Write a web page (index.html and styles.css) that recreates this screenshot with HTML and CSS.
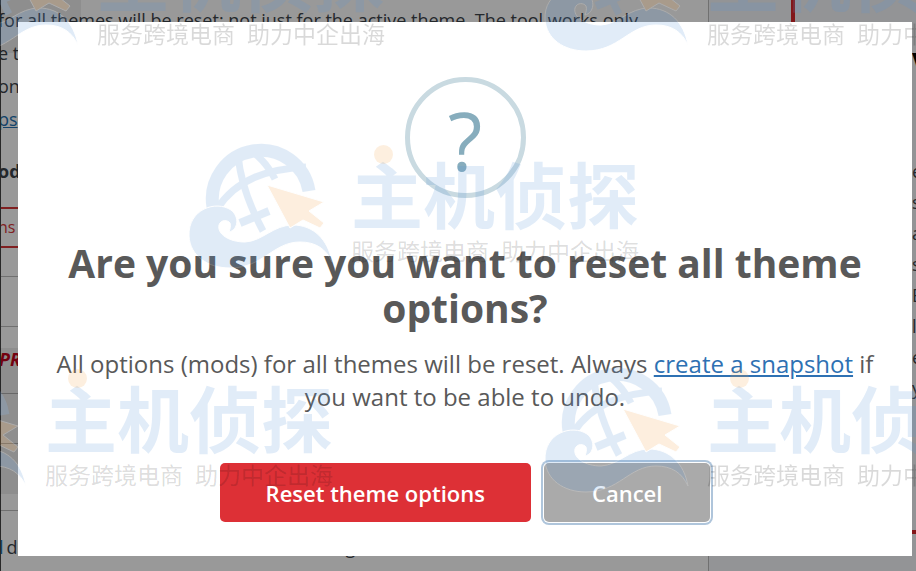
FILE: index.html
```html
<!DOCTYPE html>
<html lang="en">

<head>
    <meta charset="UTF-8">
    <meta name="viewport" content="width=device-width, initial-scale=1.0">
    <title>Reset theme options</title>

    <link rel="stylesheet" href="styles.css">
</head>

<body>
    <svg class="defs" aria-hidden="true">
        <symbol id="globe" viewBox="0 0 145 128">
            <g fill="none" stroke="#5a96d7">
                <path stroke-width="13" d="M25 66 A48.5 48.5 0 1 1 121 50" />
                <path stroke-width="7" d="M29 68 C48 38 80 28 118 26" />
                <path stroke-width="7" d="M50 14 C52 36 60 62 75 90" />
                <path stroke-width="7" d="M64 10 C74 18 82 28 87 38" />
                <path stroke-width="8" d="M52 82 L81 70" />
            </g>
            <path fill="#5a96d7" stroke="#fff" d="M144 121 C140 98 125 84 105 84 C85 84 75 100 57 101 C41 101 29 93 31 84 C33 78 40 79 42 82 C43 85 42 88 41 91 C50 89 52 76 43 69 C28 59 0 68 1 95 C2 115 20 127 42 127 C75 127 85 101 112 101 C128 101 138 108 144 121 Z" />
            <path fill="#f5a550" stroke="#fff" d="M79 44 L136 61 L121 70 L136 82 L132 87 L115 79 L102 87 Z" />
        </symbol>
    </svg>

    <div class="page">
        <main class="settings">
            <div class="intro">
                <p>for all themes will be reset; not just for the active theme. The tool works only</p>
                <p>e th</p>
                <p>on</p>
                <p><a href="#">ps</a></p>
            </div>
            <p class="mods">odi</p>
            <button type="button" class="outline">ns</button>
            <div class="row short"></div>
            <div class="row pro">PR</div>
            <div class="row short"></div>
            <div class="row"></div>
            <div class="row last"><a href="#">l</a> d <span class="g">g</span><span class="p">,</span><span class="y">,</span></div>
        </main>
        <aside class="sidebar">
            <div class="promo"></div>
            <div class="blurb">
                <b class="v">V</b>
                <p>e</p>
                <p>s</p>
                <p>a</p>
                <p>s</p>
                <p>E</p>
                <p>l</p>
                <p>e</p>
                <p>y</p>
            </div>
        </aside>
    </div>

    <div class="backdrop">
        <div class="dialog" role="dialog" aria-labelledby="title">
            <div class="icon">?</div>
            <h2 id="title">Are you sure you want to reset all theme options?</h2>
            <p class="text">All options (mods) for all themes will be reset. Always <a href="#">create a snapshot</a> if you want to be able to undo.</p>
            <div class="actions">
                <button type="button" class="btn confirm">Reset theme options</button>
                <button type="button" class="btn cancel">Cancel</button>
            </div>
        </div>
    </div>

    <div class="marks" lang="zh-CN">
        <div class="mark top-left">
            <svg class="globe"><use href="#globe" /></svg>
            <div class="brand">
                <div class="name">主机侦探</div>
                <div class="tagline"><span>服务跨境电商</span><span>助力中企出海</span></div>
            </div>
        </div>
        <div class="mark top-right">
            <svg class="globe"><use href="#globe" /></svg>
            <div class="brand">
                <div class="name">主机侦探</div>
                <div class="tagline"><span>服务跨境电商</span><span>助力中企出海</span></div>
            </div>
        </div>
        <div class="mark middle">
            <svg class="globe"><use href="#globe" /></svg>
            <div class="brand">
                <div class="name">主机侦探</div>
                <div class="tagline"><span>服务跨境电商</span><span>助力中企出海</span></div>
            </div>
        </div>
        <div class="mark bottom-left">
            <svg class="globe"><use href="#globe" /></svg>
            <div class="brand">
                <div class="name">主机侦探</div>
                <div class="tagline"><span>服务跨境电商</span><span>助力中企出海</span></div>
            </div>
        </div>
        <div class="mark bottom-right">
            <svg class="globe"><use href="#globe" /></svg>
            <div class="brand">
                <div class="name">主机侦探</div>
                <div class="tagline"><span>服务跨境电商</span><span>助力中企出海</span></div>
            </div>
        </div>
    </div>
</body>

</html>
```

FILE: styles.css
```css
* {
    box-sizing: border-box;
}

body {
    margin: 0;
    min-height: 100vh;
    overflow: hidden;
    font-family: "Open Sans", "Noto Sans", sans-serif;
    color: #3c434a;
}

p {
    margin: 0;
}

.defs {
    position: absolute;
    width: 0;
    height: 0;
}

/* page behind the dialog */
.page {
    display: flex;
    height: 100vh;
    font-size: 18px;
    line-height: 33px;
    background: #fff;
}

.settings {
    flex: 1;
    border-left: 1px solid #444;
    border-right: 1px solid #bbb;
    white-space: nowrap;
    overflow: hidden;
}

.settings p {
    text-indent: -3px;
}

.intro {
    padding-top: 4px;
}

.settings a {
    color: #2271b1;
}

.mods {
    padding: 19px 0;
    font-weight: bold;
}

.outline {
    display: block;
    width: 60px;
    height: 41px;
    padding: 0;
    border: solid #d63638;
    border-width: 2px 0;
    background: none;
    color: #d63638;
    font: inherit;
    font-size: 16px;
    text-align: left;
    text-indent: -3px;
    margin-bottom: 28px;
}

.row {
    height: 67px;
    padding: 16px 0;
    border-top: 1px solid #bbb;
}

.row.short {
    height: 50px;
}

.pro {
    color: #d0021b;
    font-weight: bold;
    font-style: italic;
    text-indent: -2px;
}

.row.last {
    display: flex;
    padding: 20px 0;
    gap: 5px;
    text-indent: -2px;
}

.last a {
    text-decoration: none;
}

.g {
    margin-left: 325px;
}

.p {
    margin-left: 24px;
}

.y {
    margin-left: 138px;
}

.sidebar {
    width: 207px;
    display: flex;
    flex-direction: column;
    background: #f6f7fa;
}

.promo {
    height: 22px;
    margin-left: 82px;
    border-left: 4px solid #d9252a;
}

.blurb {
    height: 512px;
    padding-left: 203px;
    border-bottom: 4px solid #d9252a;
    line-height: 31px;
    overflow: hidden;
}

.v {
    display: block;
    height: 134px;
    padding-top: 27px;
    font-size: 34px;
    color: #000;
}

/* dialog */
.backdrop {
    position: fixed;
    inset: 0;
    display: flex;
    align-items: flex-start;
    padding: 22px 4px 15px 18px;
    background: rgba(0, 0, 0, .4);
}

.dialog {
    flex: 1;
    display: flex;
    flex-direction: column;
    align-items: center;
    padding: 55px 32px 34px;
    background: #fff;
    color: #595959;
    text-align: center;
}

.icon {
    width: 121px;
    height: 121px;
    border: 5px solid #c9dae1;
    border-radius: 50%;
    color: #87adbd;
    font-size: 80px;
    font-weight: 500;
    line-height: 115px;
}

h2 {
    margin: 42px 0 0;
    font-size: 39px;
    line-height: 45px;
}

.text {
    margin-top: 17px;
    font-size: 24px;
    line-height: 33px;
}

.text a {
    color: #2e71b3;
}

.actions {
    display: flex;
    gap: 13px;
    margin-top: 50px;
}

.btn {
    height: 59px;
    padding: 0 46px;
    border: 0;
    border-radius: 5px;
    color: #fff;
    font: 600 22px "Open Sans", "Noto Sans", sans-serif;
    cursor: pointer;
}

.confirm {
    background: #dd3036;
}

.cancel {
    padding: 0 48px;
    background: #aaa;
    box-shadow: 0 0 0 1px #fff, 0 0 0 3px #afc5db;
}

/* watermark */
.marks {
    position: fixed;
    inset: 0;
    overflow: hidden;
    pointer-events: none;
}

.mark {
    position: absolute;
    display: flex;
    gap: 18px;
}

.top-left {
    left: -66px;
    top: -76px;
}

.top-right {
    left: 544px;
    top: -76px;
}

.middle {
    left: 188px;
    top: 141px;
}

.bottom-left {
    left: -118px;
    top: 365px;
}

.bottom-right {
    left: 544px;
    top: 365px;
}

.globe {
    flex-shrink: 0;
    width: 145px;
    height: 128px;
    opacity: .18;
}

.brand {
    position: relative;
    font-family: "Noto Sans CJK SC", sans-serif;
    white-space: nowrap;
}

/* round head of the first character */
.brand::before {
    content: "";
    position: absolute;
    left: 23px;
    top: 4px;
    width: 19px;
    height: 19px;
    border-radius: 50%;
    background: rgba(245, 165, 80, .18);
}

.name {
    padding-top: 15px;
    font-size: 72px;
    font-weight: bold;
    line-height: 72px;
    color: rgba(90, 150, 215, .18);
}

.tagline {
    display: flex;
    justify-content: space-between;
    padding-top: 5px;
    font-size: 23px;
    line-height: 34px;
    color: rgba(0, 0, 0, .15);
}
```
